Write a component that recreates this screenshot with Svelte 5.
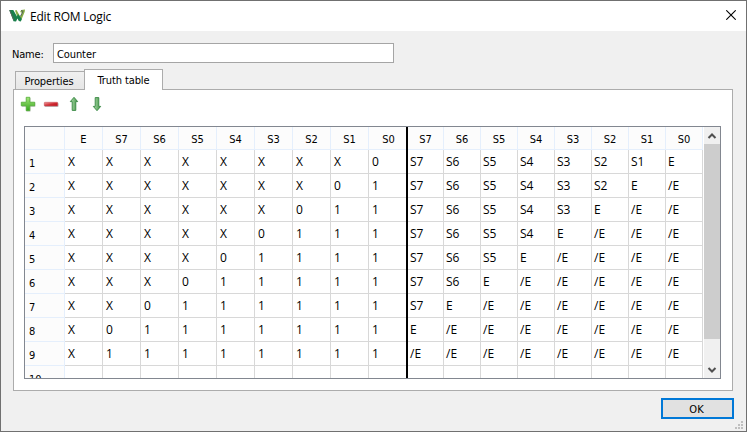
<script>
  const inputs = ['E', 'S7', 'S6', 'S5', 'S4', 'S3', 'S2', 'S1', 'S0'];
  const outputs = ['S7', 'S6', 'S5', 'S4', 'S3', 'S2', 'S1', 'S0'];
  const rows = Array.from({ length: 9 }, (_, r) => ({
    ins: inputs.map((_, c) => (c < 8 - r ? 'X' : c === 8 - r && r < 8 ? '0' : c === 0 ? 'X' : '1')),
    outs: outputs.map((s, c) => (c < 7 - r ? s : c === 7 - r ? 'E' : '/E'))
  }));
</script>

<div class="window">
  <header>
    <svg class="logo" width="16" height="14" viewBox="0 0 16 14">
      <path d="M6 1.500L7.500 1l3.700 6.500L13.200 4l-2-1 1-2L16 .5l-.3 2.300-3.700 9-1.800-.5L8 7z" fill="#86ad45" />
      <path d="M.3 1h4L8 7.500l1-2.500 3.800 5-1 2.500-2-.5L8.500 9.500 7 12.500l-2.500-.3z" fill="#17804b" />
      <path d="M.7 1.200l4.200 10M12 1.500l2 .8-2.500 5" fill="none" stroke="#55635a" stroke-width="1" />
    </svg>
    <h1>Edit ROM Logic</h1>
    <svg class="close" width="10" height="10" viewBox="0 0 10 10"><path d="M.3.3l9.4 9.4M9.7.3L.3 9.7" stroke="#000" stroke-width="1.1" /></svg>
  </header>

  <div class="name"><label for="name">Name:</label><input id="name" value="Counter" /></div>

  <nav><button class="tab first">Properties</button><button class="tab active">Truth table</button></nav>

  <main>
    <div class="tools">
      <svg width="16" height="16" viewBox="0 0 16 16">
        <defs>
          <linearGradient id="g" x2="0" y2="1"><stop stop-color="#a4e67a" /><stop offset="1" stop-color="#35a51d" /></linearGradient>
          <linearGradient id="r" x2="1" y2="1"><stop stop-color="#f0a0a0" /><stop offset=".55" stop-color="#cf2a32" /><stop offset="1" stop-color="#b80d1a" /></linearGradient>
          <linearGradient id="a" x2="1" y2="0"><stop stop-color="#b0dfac" /><stop offset="1" stop-color="#419246" /></linearGradient>
        </defs>
        <path d="M6.500 2h4v4.500h4.800v4.300h-4.800v4.700h-4v-4.700H1.800v-4h4.700z" fill="#777" opacity=".45" />
        <path d="M6.200 1.300h3.600v4.900h4.900v3.600H9.800v4.900H6.200V9.800H1.300V6.200h4.900z" fill="url(#g)" stroke="#50ad35" stroke-width=".8" />
      </svg>
      <svg width="16" height="16" viewBox="0 0 16 16"><rect x="1.500" y="7" width="14" height="4" rx="1" fill="#777" opacity=".5" /><rect x="1.300" y="6.300" width="13.400" height="3.600" rx=".6" fill="url(#r)" stroke="#c9535a" stroke-width=".6" /></svg>
      <svg width="16" height="16" viewBox="0 0 16 16"><path d="M8 1.300l3.700 4.300H9.800v8.800H6.200V5.600H4.300z" fill="url(#a)" stroke="#358641" stroke-width=".9" /></svg>
      <svg width="16" height="16" viewBox="0 0 16 16"><path d="M8 14.700l3.700-4.300H9.800V1.600H6.200v8.800H4.300z" fill="url(#a)" stroke="#358641" stroke-width=".9" /></svg>
    </div>

    <div class="frame">
      <div class="sheet">
        <div class="row head">
          <span class="num"></span>
          {#each inputs as h, i}<span class="in" class:last={i === 8}>{h}</span>{/each}
          {#each outputs as h}<span class="out">{h}</span>{/each}
        </div>
        {#each rows as row, i}
          <div class="row">
            <span class="num">{i + 1}</span>
            {#each row.ins as v, c}<span class="in" class:last={c === 8}>{v}</span>{/each}
            {#each row.outs as v}<span class="out">{v}</span>{/each}
          </div>
        {/each}
        <div class="row">
          <span class="num">10</span>
          {#each inputs as _, c}<span class="in" class:last={c === 8}></span>{/each}
          {#each outputs as _}<span class="out"></span>{/each}
        </div>
      </div>
      <div class="scroll">
        <svg width="16" height="17" viewBox="0 0 16 17"><path d="M4.500 11L8 7.500l3.500 3.500" fill="none" stroke="#505050" stroke-width="2" /></svg>
        <div class="thumb"></div>
        <svg width="16" height="17" viewBox="0 0 16 17"><path d="M4.500 7L8 10.500 11.500 7" fill="none" stroke="#505050" stroke-width="2" /></svg>
      </div>
    </div>
  </main>

  <footer><button class="ok">OK</button></footer>
  <svg class="grip" width="8" height="8" viewBox="0 0 8 8"><path d="M6 0h2v2H6zM3 3h2v2H3zM6 3h2v2H6zM0 6h2v2H0zM3 6h2v2H3zM6 6h2v2H6z" fill="#bfbfbf" /></svg>
</div>

<style>
  * { box-sizing: border-box; }
  .window {
    position: relative; width: 747px; height: 432px; overflow: hidden;
    border: 1px solid #707070; background: #f0f0f0; color: #000;
    font: 11px "DejaVu Sans Condensed", "DejaVu Sans", sans-serif; font-stretch: condensed;
  }
  header { display: flex; align-items: center; height: 30px; padding: 0 10px 0 8px; background: #fff; }
  .logo { margin-top: -1px; }
  h1 { flex: 1; margin: 0 0 0 5px; font: 12px "Open Sans", sans-serif; letter-spacing: -.2px; }
  .close { margin-top: -2px; }
  .name { display: flex; align-items: center; height: 20px; margin: 12px 0 0 11px; }
  label { width: 41px; padding-top: 2px; letter-spacing: -.2px; }
  input {
    width: 341px; height: 20px; padding: 2px 3px 0; border: 1px solid #a5a5a5; outline: 0;
    background: #fff; font: inherit; color: inherit; letter-spacing: -.1px;
  }
  nav { display: flex; align-items: flex-end; height: 21px; margin: 6px 0 0 14px; position: relative; z-index: 1; }
  .tab {
    width: 70px; height: 19px; padding: 1px 2px 0 0; border: 1px solid #acacac; border-bottom: 0;
    background: linear-gradient(#f0f0f0, #e6e6e6); font: inherit; letter-spacing: -.1px; color: #000;
  }
  .first { height: 18px; margin-bottom: 1px; }
  .active { width: 79px; height: 21px; margin-left: -1px; padding: 0; background: #fff; }
  main { width: 720px; height: 302px; margin: -1px 0 0 12px; padding: 6px 10px 0; border: 1px solid #acacac; background: #fff; }
  .tools { display: flex; gap: 7px; height: 30px; margin-left: -4px; }
  .frame { display: flex; justify-content: space-between; width: 697px; height: 253px; border: 1px solid #828790; overflow: hidden; }
  .sheet { width: 678px; flex: none; }
  .row { display: flex; height: 24px; font: 12px/23px "Open Sans", sans-serif; }
  .row span { flex: none; border-right: 1px solid #d8d8d8; border-bottom: 1px solid #d8d8d8; }
  .in { width: 38px; padding-left: 3px; }
  .out { width: 37px; padding-left: 2px; }
  .out:nth-last-child(8) { width: 36px; }
  .row .num {
    width: 40px; padding-left: 4px; background: #fcfcfc; border-color: #e5effc;
    font: 11px/28px "DejaVu Sans Condensed", "DejaVu Sans", sans-serif;
  }
  .row .last { position: relative; width: 39px; border-right: 0; }
  .last::after { content: ""; position: absolute; top: 0; right: 0; bottom: -1px; width: 2px; background: #000; }
  .head { height: 23px; font: 11px/25px "DejaVu Sans Condensed", "DejaVu Sans", sans-serif; text-align: center; }
  .head span { border-color: #e5effc; background: #fcfcfc; padding: 0; }
  .scroll { display: flex; flex-direction: column; width: 16px; background: #f0f0f0; }
  .scroll svg { flex: none; }
  .thumb { height: 195px; margin-bottom: auto; background: #cdcdcd; }
  footer { display: flex; justify-content: flex-end; padding: 7px 12px 0; }
  .ok { width: 73px; height: 21px; padding: 1px 2px 0 0; border: 2px solid #0078d7; background: #e1e1e1; font: inherit; color: #000; }
  .grip { position: absolute; right: 3px; bottom: 2px; }
</style>
